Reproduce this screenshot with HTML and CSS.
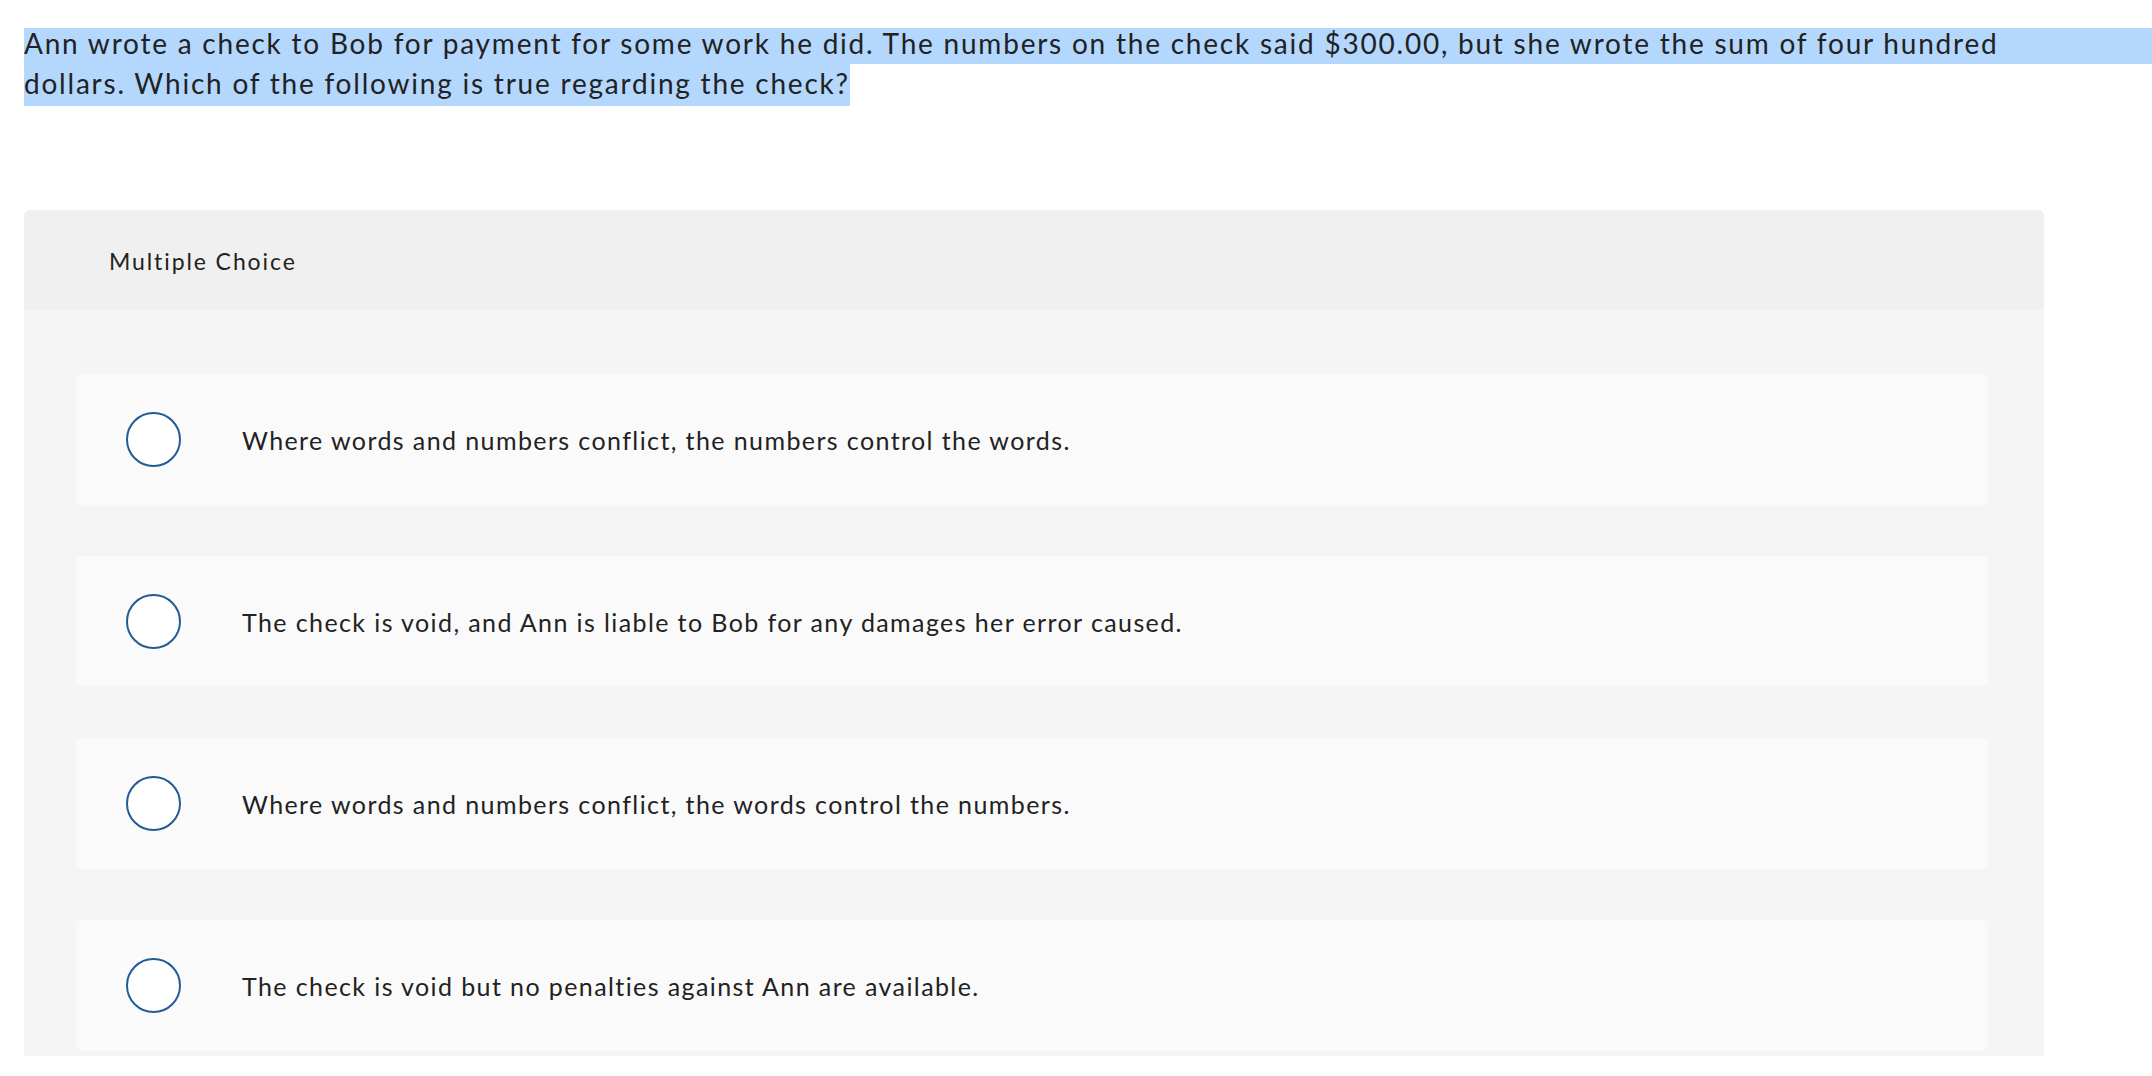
FILE: index.html
```html
<!DOCTYPE html>
<html lang="en">
<head>
<meta charset="utf-8">
<title>Multiple Choice</title>
<link rel="stylesheet" href="styles.css">
</head>
<body>
<div class="question">
  <span class="qline qline-full">Ann wrote a check to Bob for payment for some work he did. The numbers on the check said $300.00, but she wrote the sum of four hundred</span>
  <span class="qline qline-fit">dollars. Which of the following is true regarding the check?</span>
</div>
<div class="card">
  <div class="card-header">Multiple Choice</div>
  <div class="card-body">
    <div class="option"><span class="radio"></span><span class="option-text">Where words and numbers conflict, the numbers control the words.</span></div>
    <div class="option"><span class="radio"></span><span class="option-text">The check is void, and Ann is liable to Bob for any damages her error caused.</span></div>
    <div class="option"><span class="radio"></span><span class="option-text">Where words and numbers conflict, the words control the numbers.</span></div>
    <div class="option"><span class="radio"></span><span class="option-text">The check is void but no penalties against Ann are available.</span></div>
  </div>
</div>
</body>
</html>
```
FILE: styles.css
```css
html, body {
  margin: 0;
  padding: 0;
  background: #ffffff;
}
body {
  font-family: "Lato", "Noto Sans", sans-serif;
  font-variant-ligatures: none;
  color: #222222;
}
.question {
  padding: 28px 0 0 24px;
  font-size: 28px;
  letter-spacing: 1.78px;
}
.qline {
  display: block;
  background: #b4d7fe;
  line-height: 30px;
  white-space: nowrap;
}
.qline-full {
  padding-bottom: 6px;
}
.qline-fit {
  width: fit-content;
  padding-top: 4px;
  padding-bottom: 8px;
}
.card {
  margin: 104px 0 0 24px;
  width: 2020px;
  height: 846px;
  overflow: hidden;
  border-radius: 6px 6px 0 0;
  background: #f5f5f5;
}
.card-header {
  height: 100px;
  box-sizing: border-box;
  padding: 37px 0 0 85px;
  font-size: 23px;
  line-height: 28px;
  letter-spacing: 1.9px;
  background: #f0f0f0;
}
.card-body {
  padding: 64px 56px 0 52px;
  display: flex;
  flex-direction: column;
  gap: 51px;
}
.option {
  height: 131px;
  background: #fafafa;
  border-radius: 6px;
  display: flex;
  align-items: center;
  padding-left: 50px;
}
.radio {
  flex: none;
  width: 51px;
  height: 51px;
  border: 2px solid #245b92;
  border-radius: 50%;
  background: #ffffff;
}
.option-text {
  margin-left: 61px;
  font-size: 25px;
  line-height: 30px;
  letter-spacing: 1.4px;
}
```
